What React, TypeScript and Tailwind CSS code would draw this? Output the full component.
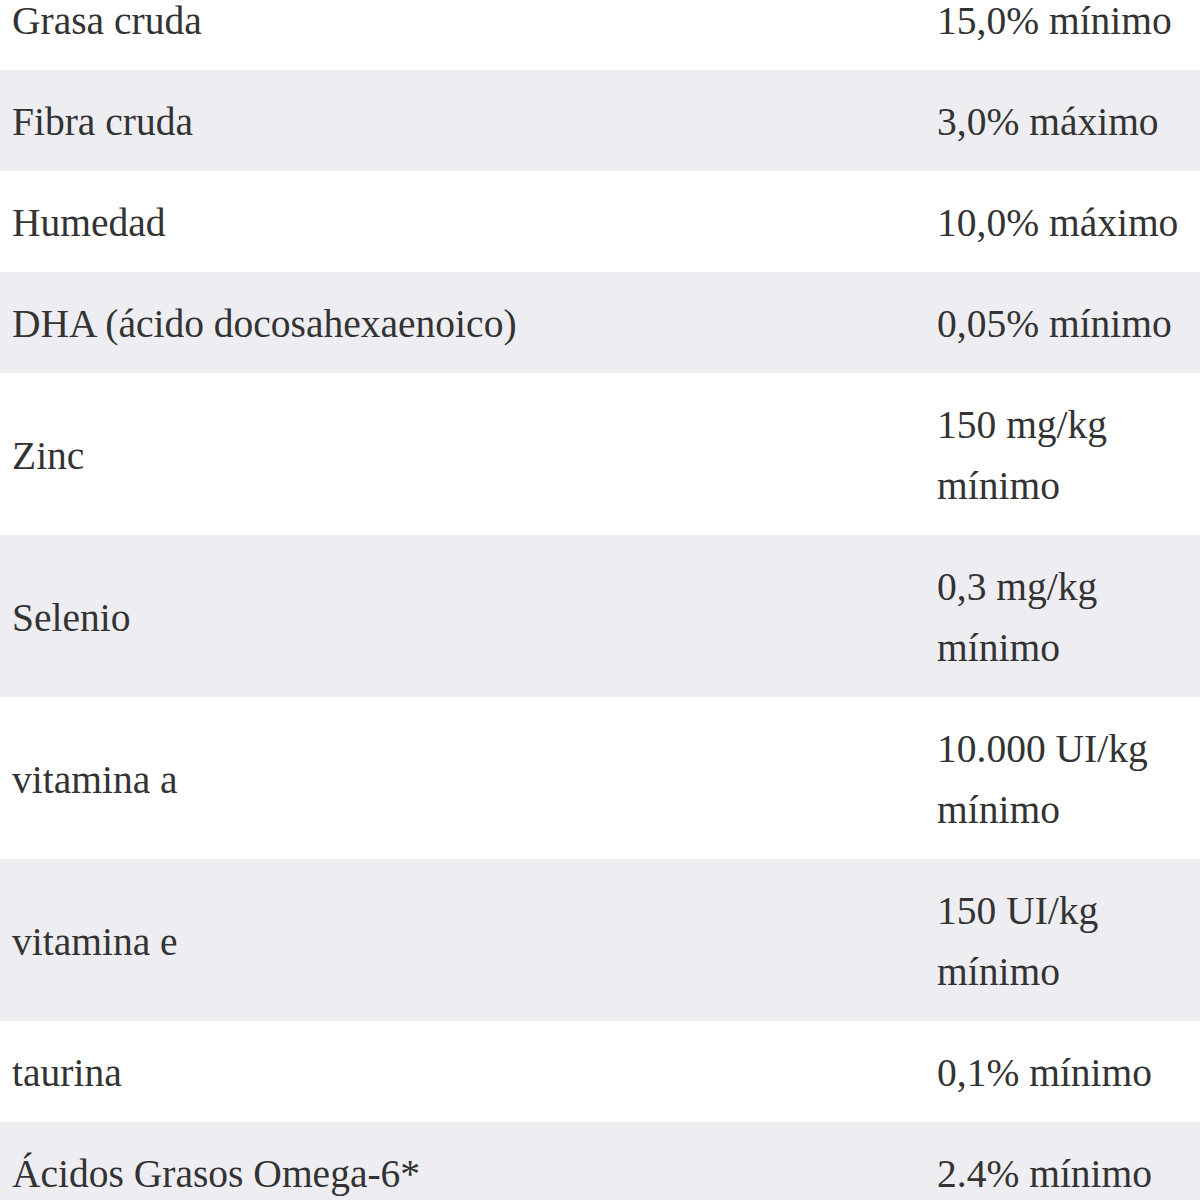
const rows: [string, string][] = [
  ["Grasa cruda", "15,0% mínimo"],
  ["Fibra cruda", "3,0% máximo"],
  ["Humedad", "10,0% máximo"],
  ["DHA (ácido docosahexaenoico)", "0,05% mínimo"],
  ["Zinc", "150 mg/kg mínimo"],
  ["Selenio", "0,3 mg/kg mínimo"],
  ["vitamina a", "10.000 UI/kg mínimo"],
  ["vitamina e", "150 UI/kg mínimo"],
  ["taurina", "0,1% mínimo"],
  ["Ácidos Grasos Omega-6*", "2.4% mínimo"],
];

export default function App() {
  return (
    <div className="w-[1200px] h-[1200px] overflow-hidden bg-white">
      <table
        className="w-[1200px] -mt-[31px] border-collapse table-fixed text-[#333333] text-[39.5px] leading-[61px]"
        style={{ fontFamily: '"Liberation Serif", "DejaVu Serif", serif' }}
      >
        <colgroup>
          <col className="w-[925px]" />
          <col className="w-[275px]" />
        </colgroup>
        <tbody>
          {rows.map(([name, value], i) => (
            <tr key={name} className={i % 2 === 1 ? "bg-[#eeeef2]" : "bg-white"}>
              <td className="px-3 pt-[22px] pb-[18px] align-middle">{name}</td>
              <td className="px-3 pt-[22px] pb-[18px] align-middle">{value}</td>
            </tr>
          ))}
        </tbody>
      </table>
    </div>
  );
}
